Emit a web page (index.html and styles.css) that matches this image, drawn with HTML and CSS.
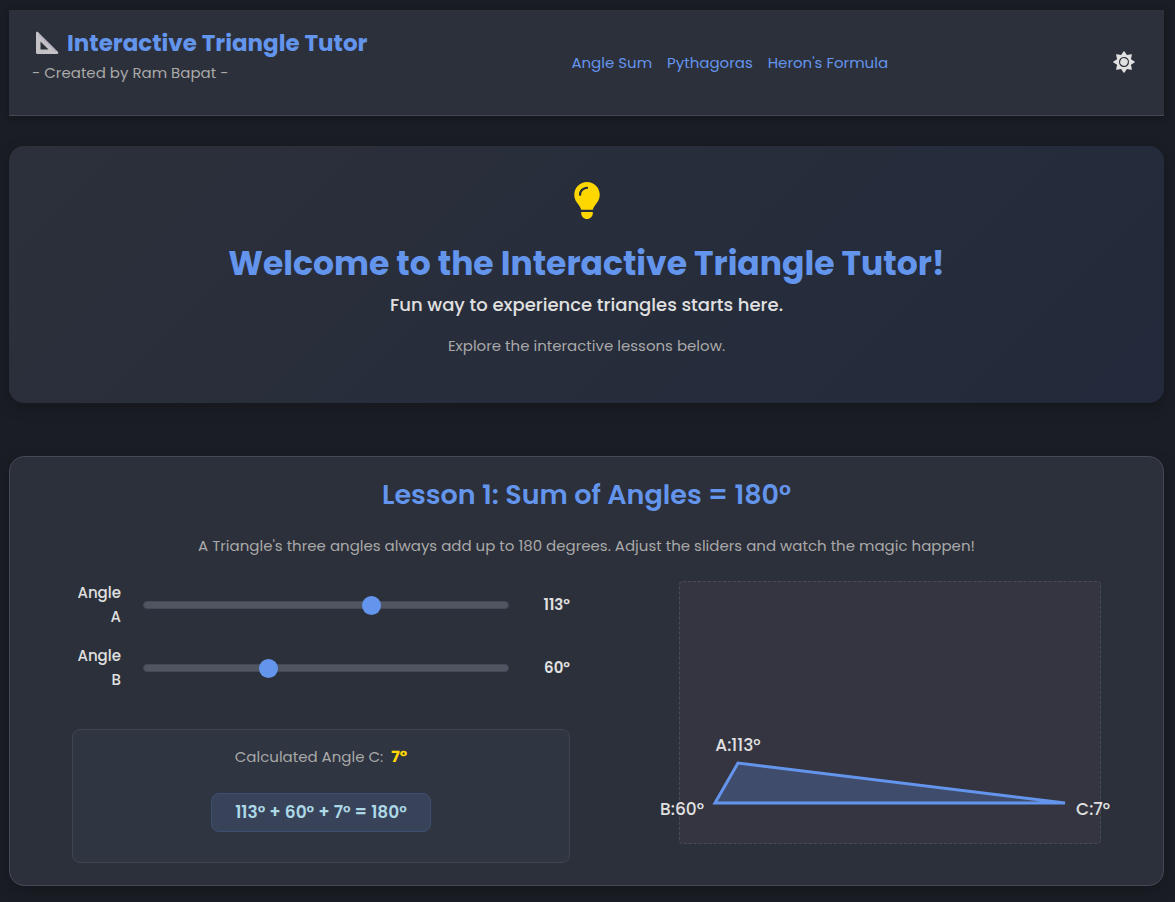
FILE: index.html
```html
<!DOCTYPE html>
<html lang="en">
<head>
<meta charset="utf-8">
<meta name="viewport" content="width=device-width, initial-scale=1">
<title>Interactive Triangle Tutor</title>
<link rel="stylesheet" href="styles.css">
</head>
<body>
<header class="site-header">
  <div class="brand">
    <div class="brand-title">
      <svg class="brand-icon" viewBox="0 0 24 24" aria-hidden="true">
        <path fill="#c4c2c4" fill-rule="evenodd" d="M1 2.2C1 .9 2.300 .4 3.200 1.300L22.800 20.700C23.800 21.700 23.300 23 22 23H2.500C1.600 23 1 22.400 1 21.500ZM5.500 10.500V18.500H13.500Z"/>
        <path d="M4 3.600L21.500 20.900" stroke="#9c8fc6" stroke-width="1.200" stroke-dasharray="1 1.500"/>
      </svg>
      <h1 class="brand-name">Interactive Triangle Tutor</h1>
    </div>
    <p class="byline">- Created by Ram Bapat -</p>
  </div>
  <nav class="site-nav" aria-label="Lessons">
    <a href="#angle-sum">Angle Sum</a>
    <a href="#pythagoras">Pythagoras</a>
    <a href="#heron">Heron's Formula</a>
  </nav>
  <button class="theme-toggle" type="button" aria-label="Toggle theme">
    <svg class="theme-icon" viewBox="-24 -24 560 560" aria-hidden="true">
      <path transform="rotate(22.500 256 256)" fill="currentColor" d="M361.5 1.2c5 2.1 8.6 6.6 9.6 11.9L391 121l107.9 19.800c5.3 1 9.8 4.600 11.9 9.600s1.500 10.700-1.600 15.200L446.900 256l62.300 90.300c3.100 4.500 3.700 10.200 1.600 15.200s-6.600 8.600-11.900 9.600L391 391 371.100 498.900c-1 5.300-4.600 9.800-9.600 11.900s-10.700 1.500-15.200-1.600L256 446.900l-90.300 62.300c-4.500 3.100-10.200 3.700-15.200 1.600s-8.600-6.600-9.600-11.900L121 391 13.100 371.100c-5.300-1-9.800-4.600-11.900-9.600s-1.500-10.700 1.600-15.200L65.100 256 2.800 165.700c-3.100-4.500-3.700-10.200-1.600-15.200s6.600-8.600 11.900-9.600L121 121 140.900 13.100c1-5.300 4.600-9.800 9.600-11.900s10.700-1.500 15.200 1.600L256 65.100 346.300 2.800c4.500-3.100 10.200-3.700 15.200-1.600zM160 256a96 96 0 1 1 192 0 96 96 0 1 1 -192 0zm224 0a128 128 0 1 0 -256 0 128 128 0 1 0 256 0z"/>
    </svg>
  </button>
</header>

<main>
  <section class="hero">
    <svg class="hero-icon" viewBox="0 0 384 512" aria-hidden="true">
      <path fill="currentColor" d="M272 384c9.600-31.900 29.500-59.100 49.200-86.200c5.200-7.100 10.400-14.200 15.400-21.400c19.800-28.500 31.400-63 31.400-100.300C368 78.800 289.200 0 192 0S16 78.800 16 176c0 37.300 11.600 71.900 31.400 100.300c5 7.200 10.200 14.300 15.400 21.400c19.800 27.100 39.700 54.400 49.200 86.200H272zM192 512c44.200 0 80-35.800 80-80V416H112v16c0 44.200 35.800 80 80 80zM112 176c0 8.800-7.200 16-16 16s-16-7.200-16-16c0-61.900 50.100-112 112-112c8.800 0 16 7.200 16 16s-7.200 16-16 16c-44.200 0-80 35.800-80 80z"/>
    </svg>
    <h2 class="hero-title">Welcome to the Interactive Triangle Tutor!</h2>
    <p class="hero-tagline">Fun way to experience triangles starts here.</p>
    <p class="hero-note">Explore the interactive lessons below.</p>
  </section>

  <section class="lesson" id="angle-sum">
    <h2 class="lesson-title">Lesson 1: Sum of Angles = 180°</h2>
    <p class="lesson-intro">A Triangle's three angles always add up to 180 degrees. Adjust the sliders and watch the magic happen!</p>
    <div class="lesson-body">
      <div class="controls">
        <div class="slider-row">
          <label class="slider-label" for="angle-a">Angle A</label>
          <input class="slider" id="angle-a" type="range" min="1" max="178" value="113">
          <output class="slider-value" for="angle-a">113°</output>
        </div>
        <div class="slider-row">
          <label class="slider-label" for="angle-b">Angle B</label>
          <input class="slider" id="angle-b" type="range" min="1" max="178" value="60">
          <output class="slider-value" for="angle-b">60°</output>
        </div>
        <div class="result">
          <p class="result-text">Calculated Angle C: <strong class="result-angle">7°</strong></p>
          <p class="equation">113° + 60° + 7° = 180°</p>
        </div>
      </div>
      <div class="canvas">
        <svg class="triangle" viewBox="0 0 420 261" role="img" aria-label="Triangle with angles 113, 60 and 7 degrees">
          <polygon class="triangle-shape" points="58,181 35,221 385,221"/>
          <text class="vertex" x="58" y="169" text-anchor="middle">A:113°</text>
          <text class="vertex" x="24" y="233" text-anchor="end">B:60°</text>
          <text class="vertex" x="396" y="233">C:7°</text>
        </svg>
      </div>
    </div>
  </section>
</main>
</body>
</html>
```

FILE: styles.css
```css
:root {
  --page: #1a1d24;
  --card: #2c303a;
  --line: #454856;
  --accent: #6495ed;
  --text: #e0e0e0;
  --muted: #a9a9a9;
  --gold: #ffd700;
}

* {
  box-sizing: border-box;
}

body {
  margin: 0;
  padding: 10px 11px 16px 9px;
  background: var(--page);
  color: var(--text);
  font-family: Poppins, Inter, sans-serif;
  font-size: 15px;
  line-height: 24px;
}

h1,
h2,
p {
  margin: 0;
}

.site-header {
  display: flex;
  align-items: center;
  justify-content: space-between;
  padding: 15px 8px 30px 23px;
  background: var(--card);
  border-bottom: 1px solid var(--line);
  box-shadow: 0 2px 8px rgba(0, 0, 0, 0.3);
}

.brand-title {
  display: flex;
  align-items: center;
  gap: 8px;
  padding-left: 3px;
}

.brand-icon {
  width: 24px;
  height: 24px;
}

.brand-name {
  color: var(--accent);
  font-size: 23px;
  font-weight: 700;
  line-height: 36px;
}

.byline {
  color: var(--muted);
}

.site-nav {
  display: flex;
  gap: 15px;
  padding-top: 16px;
}

.site-nav a {
  color: var(--accent);
  text-decoration: none;
}

.theme-toggle {
  display: flex;
  margin-top: 14px;
  padding: 6px 21px;
  border: 0;
  background: none;
  color: var(--text);
  cursor: pointer;
}

.theme-icon {
  width: 22px;
  height: 22px;
}

.hero {
  display: flex;
  flex-direction: column;
  align-items: center;
  margin-top: 30px;
  padding: 36px 24px 45px;
  border-radius: 15px;
  background: linear-gradient(135deg, #2c303a, #222a3b);
  box-shadow: 0 5px 15px rgba(0, 0, 0, 0.2);
  text-align: center;
}

.hero-icon {
  width: 28px;
  height: 37px;
  color: var(--gold);
}

.hero-title {
  margin-top: 21px;
  color: var(--accent);
  font-size: 33px;
  font-weight: 700;
  line-height: 48px;
}

.hero-tagline {
  margin-top: 4px;
  font-size: 18px;
  font-weight: 500;
  line-height: 26px;
}

.hero-note {
  margin-top: 16px;
  color: var(--muted);
}

.lesson {
  margin-top: 53px;
  padding: 18px 62px 22px;
  border: 1px solid var(--line);
  border-radius: 15px;
  background: var(--card);
  box-shadow: 0 5px 15px rgba(0, 0, 0, 0.2);
}

.lesson-title {
  color: var(--accent);
  font-size: 27px;
  font-weight: 600;
  line-height: 40px;
  text-align: center;
}

.lesson-intro {
  margin-top: 19px;
  color: var(--muted);
  text-align: center;
}

.lesson-body {
  display: grid;
  grid-template-columns: 498fr 422fr;
  align-items: start;
  gap: 109px;
  margin-top: 23px;
}

.controls {
  display: flex;
  flex-direction: column;
  gap: 15px;
}

.slider-row {
  display: grid;
  grid-template-columns: 49px 1fr 39px;
  align-items: center;
  gap: 22px;
}

.slider-label {
  font-weight: 500;
  text-align: right;
}

.slider {
  width: 100%;
  height: 8px;
  margin: 0;
  border: 1px solid #454856;
  border-radius: 4px;
  background: #505562;
  appearance: none;
}

.slider::-webkit-slider-thumb {
  width: 19px;
  height: 19px;
  border-radius: 50%;
  background: var(--accent);
  appearance: none;
}

.slider-value {
  font-weight: 600;
  text-align: right;
}

.result {
  display: flex;
  flex-direction: column;
  align-items: center;
  gap: 24px;
  margin-top: 22px;
  padding: 15px 20px 30px;
  border: 1px solid #404552;
  border-radius: 8px;
  background: #2f3541;
}

.result-text {
  color: var(--muted);
}

.result-angle {
  margin-left: 4px;
  color: var(--gold);
  font-size: 16px;
  font-weight: 700;
}

.equation {
  padding: 6px 23px;
  border: 1px solid #3d4e70;
  border-radius: 8px;
  background: #38435a;
  color: #add8e6;
  font-size: 17px;
  font-weight: 600;
  line-height: 25px;
}

.canvas {
  border: 1px dashed #494b58;
  border-radius: 4px;
  background: #343541;
}

.triangle {
  display: block;
  width: 100%;
  overflow: visible;
}

.triangle-shape {
  fill: rgba(100, 149, 237, 0.25);
  stroke: var(--accent);
  stroke-width: 3;
}

.vertex {
  fill: var(--text);
  font-size: 17px;
  font-weight: 500;
}
```
